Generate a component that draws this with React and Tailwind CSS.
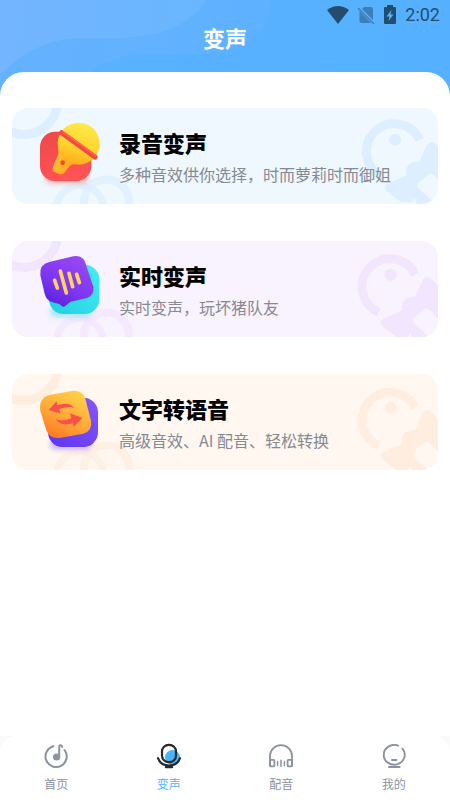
// Voice changer home screen
import React from 'react';

const MicArt = () => (
  <svg viewBox="108 48 198 240" className="h-20 w-[66px] shrink-0" aria-hidden="true">
    <defs>
      <linearGradient id="mic-tile" x1="0" y1="0" x2="0.4" y2="1">
        <stop offset="0" stopColor="#ee4848" />
        <stop offset="1" stopColor="#ff5355" />
      </linearGradient>
      <linearGradient id="mic-head" x1="0.6" y1="0" x2="0.3" y2="1">
        <stop offset="0" stopColor="#ffe94a" />
        <stop offset="0.55" stopColor="#ffd52e" />
        <stop offset="1" stopColor="#ffa91c" />
      </linearGradient>
      <linearGradient id="mic-handle" x1="0" y1="0" x2="1" y2="0.6">
        <stop offset="0" stopColor="#ffcb3a" />
        <stop offset="1" stopColor="#ffa21c" />
      </linearGradient>
      <filter id="mic-blur" x="-30%" y="-60%" width="160%" height="220%">
        <feGaussianBlur stdDeviation="8" />
      </filter>
    </defs>
    <rect x="135" y="215" width="130" height="36" rx="18" fill="#ff5a5a" opacity="0.4" filter="url(#mic-blur)" />
    <rect x="120" y="95" width="154" height="149" rx="46" fill="url(#mic-tile)" />
    <path d="M174 145 Q178 160 171 172 L159 200 Q155 212 165 217 L177 222 Q188 226 195 217 L206 202 Q214 192 228 192 Z" fill="url(#mic-handle)" />
    <circle cx="236" cy="131" r="63" fill="url(#mic-head)" />
    <path d="M185 98 L285 171" stroke="#f4473d" strokeWidth="15" strokeLinecap="round" />
    <path d="M189 96 L287 167" stroke="#ff6556" strokeWidth="5" strokeLinecap="round" />
    <circle cx="188" cy="188" r="7" fill="#f04a30" />
  </svg>
);

const BubbleArt = () => (
  <svg viewBox="108 42 198 240" className="h-20 w-[66px] shrink-0" aria-hidden="true">
    <defs>
      <linearGradient id="bubble-back" x1="0" y1="1" x2="1" y2="0">
        <stop offset="0" stopColor="#22cfe0" />
        <stop offset="1" stopColor="#45eef6" />
      </linearGradient>
      <linearGradient id="bubble-front" x1="0.8" y1="0" x2="0.2" y2="1">
        <stop offset="0" stopColor="#9a49f4" />
        <stop offset="0.6" stopColor="#7e35f1" />
        <stop offset="1" stopColor="#5420dc" />
      </linearGradient>
      <filter id="bubble-blur" x="-30%" y="-60%" width="160%" height="220%">
        <feGaussianBlur stdDeviation="8" />
      </filter>
    </defs>
    <rect x="150" y="215" width="125" height="32" rx="16" fill="#35d8e6" opacity="0.4" filter="url(#bubble-blur)" />
    <rect x="147" y="89" width="151" height="148" rx="44" fill="url(#bubble-back)" />
    <path
      d="M148 81 L220 64 Q247 59 256 83 L280 155 Q284 181 258 190 L212 200 Q207 202 203 207 L196 213 Q190 218 184 212 L178 207 L158 202 Q139 197 134 176 L121 121 Q117 89 148 81 Z"
      fill="url(#bubble-front)"
    />
    <g stroke="#ffd45c" strokeWidth="11" strokeLinecap="round">
      <path d="M164 136 L172 159" />
      <path d="M181 108 L199 174" />
      <path d="M207 115 L218 155" />
      <path d="M230 118 L238 143" />
    </g>
  </svg>
);

const SwapArt = () => (
  <svg viewBox="108 49 198 240" className="h-20 w-[66px] shrink-0" aria-hidden="true">
    <defs>
      <linearGradient id="swap-back" x1="0" y1="1" x2="1" y2="0">
        <stop offset="0" stopColor="#5b35ee" />
        <stop offset="1" stopColor="#8a56fa" />
      </linearGradient>
      <linearGradient id="swap-front" x1="0.75" y1="0" x2="0.2" y2="1">
        <stop offset="0" stopColor="#ffd348" />
        <stop offset="0.55" stopColor="#ffa838" />
        <stop offset="1" stopColor="#ff7422" />
      </linearGradient>
      <filter id="swap-blur" x="-30%" y="-60%" width="160%" height="220%">
        <feGaussianBlur stdDeviation="8" />
      </filter>
    </defs>
    <rect x="150" y="220" width="125" height="32" rx="16" fill="#7b55f5" opacity="0.4" filter="url(#swap-blur)" />
    <rect x="144" y="96" width="150" height="148" rx="44" fill="url(#swap-back)" />
    <path
      d="M148 88 L215 76 Q247 72 256 99 L273 165 Q278 195 250 204 L178 217 Q148 220 139 193 L121 136 Q115 99 148 88 Z"
      fill="url(#swap-front)"
    />
    <path d="M146 133 L170 107 L172 119 Q205 107 223 126 Q202 121 177 131 L182 144 Z" fill="#fb4f4c" />
    <path d="M247 157 L210 143 L214 158 Q190 169 167 161 Q182 183 219 173 L221 184 Z" fill="#fb4f4c" />
  </svg>
);

const features = [
  {
    title: '录音变声',
    desc: '多种音效供你选择，时而萝莉时而御姐',
    card: 'bg-[#eff7ff]',
    deco: 'text-[#dceeff]',
    shift: 'translate(13 -6)',
    Art: MicArt,
  },
  {
    title: '实时变声',
    desc: '实时变声，玩坏猪队友',
    card: 'bg-[#f9f2ff]',
    deco: 'text-[#f2e5fe]',
    shift: 'translate(0 0)',
    Art: BubbleArt,
  },
  {
    title: '文字转语音',
    desc: '高级音效、AI 配音、轻松转换',
    card: 'bg-[#fff7f0]',
    deco: 'text-[#ffeddf]',
    shift: 'translate(0 1)',
    Art: SwapArt,
  },
];

const FeatureCard = ({ title, desc, card, deco, shift, Art }) => (
  <button
    type="button"
    className={`relative flex w-full items-center gap-[17px] overflow-hidden rounded-2xl py-2 pl-6 text-left ${card}`}
  >
    {/* faded rings on the left, character on the right */}
    <svg viewBox="0 0 130 96" className={`absolute left-0 top-0 h-24 w-[130px] ${deco}`} fill="none" stroke="currentColor" aria-hidden="true">
      <circle cx="12" cy="-7" r="33.5" strokeWidth="9" />
      <circle cx="68" cy="101" r="23.5" strokeWidth="7" opacity="0.7" />
      <circle cx="94.5" cy="94" r="22.5" strokeWidth="8" opacity="0.7" />
    </svg>
    <svg viewBox="384 17 255 288" className={`absolute right-0 top-0 h-24 w-[85px] ${deco}`} aria-hidden="true">
      <g transform={shift}>
        <path d="M571 118 A84 84 0 1 0 461 231" fill="none" stroke="currentColor" strokeWidth="26" />
        <circle cx="497" cy="118" r="18" fill="currentColor" />
        <path
          d="M592 137 Q600 120 615 127 L660 170 V270 L614 224 Q606 216 597 222 L568 247 Q559 256 567 264 L606 300 L600 315 H565 L555 291 L549 305 H515 L472 272 Q460 260 474 250 L532 225 Q526 206 538 194 Q550 182 569 185 Z"
          fill="currentColor"
        />
      </g>
    </svg>
    <div className="relative">
      <Art />
    </div>
    <div className="relative min-w-0 flex-1 pt-1">
      <h2 className="text-[22px] font-black leading-8 text-black">{title}</h2>
      <p className="text-base leading-8 text-[#858a93]">{desc}</p>
    </div>
  </button>
);

const HomeIcon = () => (
  <svg viewBox="0 0 24 24" className="h-6 w-6" fill="none" stroke="currentColor" strokeWidth="2" strokeLinecap="round" aria-hidden="true">
    <path d="M9.5 2.2 A10.6 10.6 0 1 0 20.5 6" />
    <circle cx="12.6" cy="13" r="3.6" fill="currentColor" stroke="none" />
    <path d="M15.2 13 V3 Q15.2 1.2 16.6 1.2 Q18 1.2 18.2 3" />
  </svg>
);

const VoiceIcon = () => (
  <svg viewBox="0 0 24 24" className="h-6 w-6 overflow-visible" fill="none" strokeLinecap="round" aria-hidden="true">
    <circle cx="15.5" cy="13.5" r="7.5" fill="#49b4fb" />
    <rect x="5" y="0.8" width="14" height="17.4" rx="6.8" stroke="#252a30" strokeWidth="2.2" />
    <path d="M1 14.2 C4.5 24 19.5 24 23 14.2" stroke="#252a30" strokeWidth="2.2" />
    <path d="M9 23 H15" stroke="#252a30" strokeWidth="2.4" />
  </svg>
);

const DubIcon = () => (
  <svg viewBox="0 0 24 24" className="h-6 w-6" fill="none" stroke="currentColor" strokeWidth="1.8" strokeLinecap="round" aria-hidden="true">
    <path d="M1 21.5 V12 A11 10.8 0 0 1 23 12 V21.5" />
    <rect x="1" y="15.8" width="4.4" height="6.6" rx="1" />
    <rect x="18.6" y="15.8" width="4.4" height="6.6" rx="1" />
    <path d="M8.6 17.5 V21.5 M12 16.2 V22.6 M15.4 17.5 V21.5" strokeWidth="1.5" />
  </svg>
);

const MineIcon = () => (
  <svg viewBox="0 0 24 24" className="h-6 w-6" fill="none" stroke="currentColor" strokeWidth="1.9" strokeLinecap="round" aria-hidden="true">
    <path d="M16 1.6 A10.5 9.9 0 1 0 20.4 4.6" />
    <path d="M10 16 H14.4" />
    <path d="M7 23 H17.6" />
  </svg>
);

const tabs = [
  { label: '首页', Icon: HomeIcon },
  { label: '变声', Icon: VoiceIcon, active: true },
  { label: '配音', Icon: DubIcon },
  { label: '我的', Icon: MineIcon },
];

const StatusBar = () => (
  <div className="flex h-6 items-center justify-end pr-2.5 pt-1.5 text-[#234d6d]">
    <svg viewBox="0 0 22 18" className="mr-2 h-[18px] w-[22px]" fill="currentColor" aria-hidden="true">
      <path d="M11 18 L0 4 Q11 -4 22 4 Z" />
    </svg>
    <svg viewBox="0 0 18 18" className="mr-2 h-[18px] w-[18px] opacity-50" aria-hidden="true">
      <path d="M7 1 H14 Q16 1 16 3 V14 L5 3 Z M2.5 5 L14 17 H4.5 Q2.5 17 2.5 15 Z" fill="currentColor" />
      <path d="M1 2 L17 18" stroke="currentColor" strokeWidth="1.5" />
    </svg>
    <svg viewBox="0 0 14 20" className="mr-2 h-5 w-3.5" fill="currentColor" fillRule="evenodd" aria-hidden="true">
      <path d="M4 0 H10 V2 H12 Q13 2 13 3 V18 Q13 19 12 19 H2 Q1 19 1 18 V3 Q1 2 2 2 H4 Z M8.5 5 L3.5 11.5 H6.5 L5.5 16 L10.5 9.5 H7.5 Z" />
    </svg>
    <span className="font-[Roboto,sans-serif] text-lg leading-none">2:02</span>
  </div>
);

const App = () => (
  <div className="relative flex min-h-screen flex-col bg-[linear-gradient(100deg,#74b5ff,#69b6ff_35%,#55b3ff_75%)] font-['Noto_Sans_CJK_SC','Noto_Sans',sans-serif]">
    <svg viewBox="0 0 450 100" preserveAspectRatio="none" className="absolute left-0 top-0 h-[100px] w-full" aria-hidden="true">
      <path d="M0 75 C25 50 50 38 85 38 C125 40 185 38 206 0 H450 V100 H0 Z" fill="#5aafff" opacity="0.6" />
      <path d="M88 72 C105 60 130 53 155 54 C190 56 235 58 262 30 C268 20 272 8 271 0 H450 V100 H88 Z" fill="#53b0ff" opacity="0.6" />
    </svg>

    <header className="relative pb-[22px]">
      <StatusBar />
      <h1 className="text-center text-[22px] font-bold leading-[26px] text-white">变声</h1>
    </header>

    <main className="relative flex flex-1 flex-col gap-[37px] rounded-t-3xl bg-white px-3 pb-9 pt-9">
      {features.map((item) => (
        <FeatureCard key={item.title} {...item} />
      ))}
    </main>

    <div className="relative bg-[#fafafa]">
      <nav className="flex rounded-t-2xl bg-white pb-1.5 pt-2">
        {tabs.map(({ label, Icon, active }) => (
          <a
            key={label}
            href="#"
            aria-current={active ? 'page' : undefined}
            className={`flex flex-1 flex-col items-center gap-1.5 ${active ? 'text-[#49b4fb]' : 'text-[#8c939f]'}`}
          >
            <Icon />
            <span className="text-xs leading-5">{label}</span>
          </a>
        ))}
      </nav>
    </div>
  </div>
);

export default App;
